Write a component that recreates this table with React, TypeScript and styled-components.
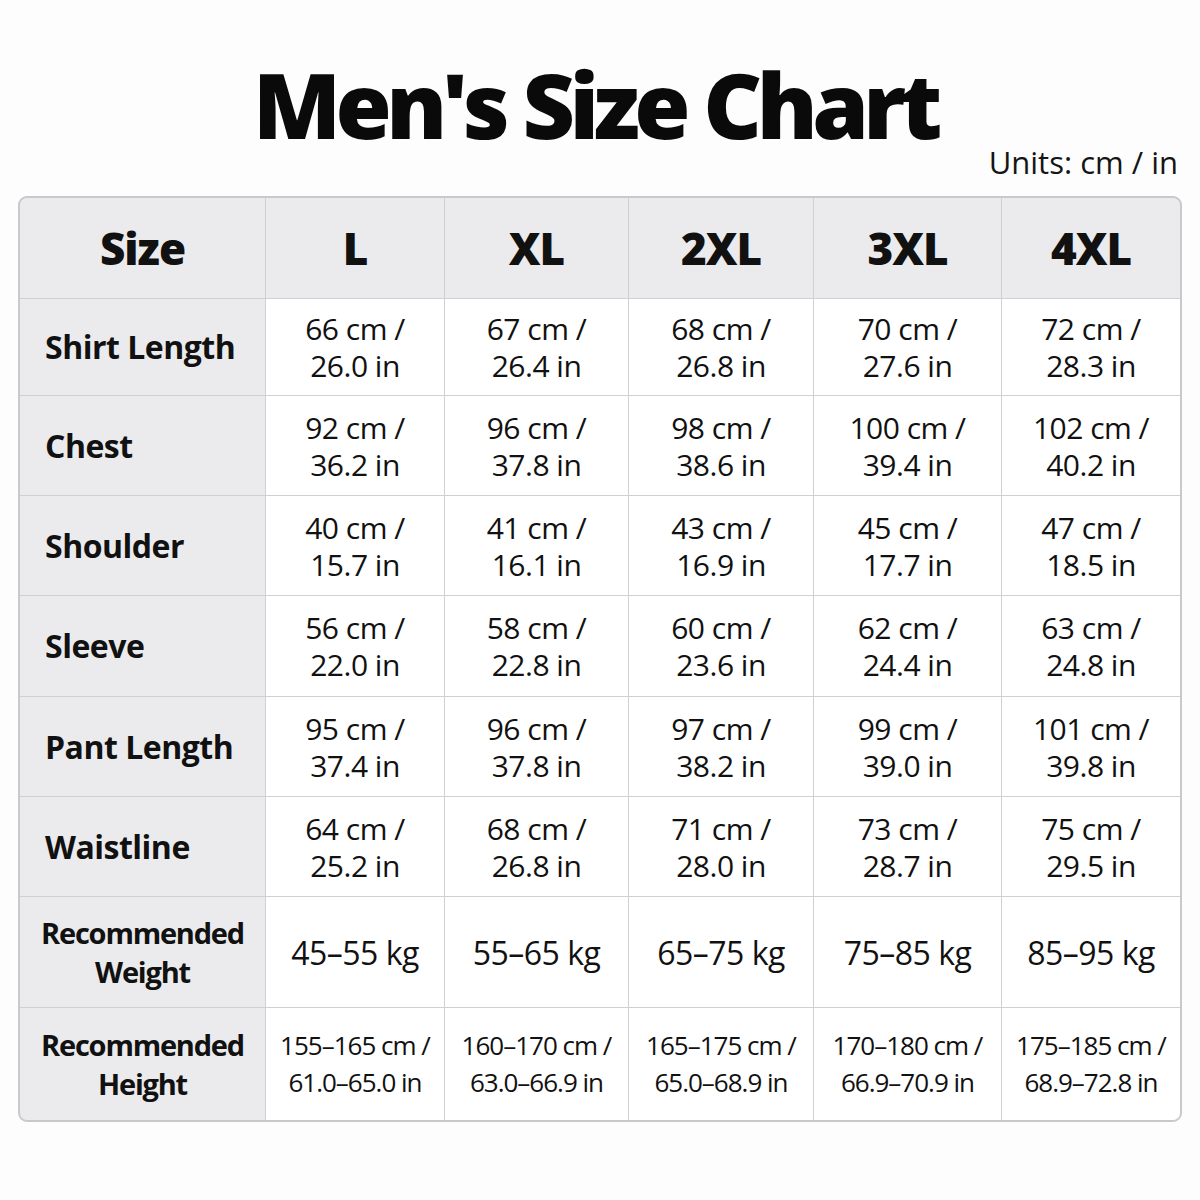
import React from "react";
import styled, { createGlobalStyle } from "styled-components";

const Global = createGlobalStyle`
  html, body { margin: 0; padding: 0; background: #fdfdfd; }
  body { font-family: "Open Sans", "Noto Sans", sans-serif; color: #111; }
`;

const Page = styled.div`
  width: 1200px;
  height: 1200px;
  box-sizing: border-box;
  padding: 0 18px;
  display: flex;
  flex-direction: column;
`;

const Title = styled.h1`
  margin: 49px 0 0;
  padding-right: 10px;
  font-size: 91px;
  line-height: 110px;
  font-weight: 800;
  letter-spacing: -5.5px;
  text-align: center;
  color: #0a0a0a;
`;

const Units = styled.div`
  align-self: flex-end;
  margin: -15px 4px 0 0;
  font-size: 31px;
  line-height: 36px;
  font-weight: 500;
  letter-spacing: 0px;
  color: #151515;
`;

const Table = styled.div`
  margin-top: 16px;
  display: grid;
  grid-template-columns: 245px 178px 183px 184px 187px 1fr;
  grid-template-rows: 100px 96px 99px 99px 100px 99px 99px 110px 112px;
  gap: 1px;
  background: #d0d0d2;
  border: 2px solid #c9c9cb;
  border-radius: 9px;
  overflow: hidden;
`;

const Cell = styled.div<{ $head?: boolean; $label?: boolean; $center?: boolean; $size?: "big" | "small" }>`
  display: flex;
  flex-direction: column;
  align-items: ${(p) => (p.$label && !p.$center ? "flex-start" : "center")};
  justify-content: center;
  padding: ${(p) => (p.$label && !p.$center ? "0 0 0 25px" : "0")};
  background: ${(p) => (p.$head || p.$label ? "#ebebed" : "#ffffff")};
  text-align: center;
  font-weight: ${(p) => (p.$head ? 800 : p.$label ? 700 : 500)};
  font-size: ${(p) => (p.$head ? "44px" : p.$size === "small" ? "26px" : p.$size === "big" ? "32px" : "30px")};
  line-height: ${(p) => (p.$head ? "50px" : "37px")};
  letter-spacing: ${(p) => (p.$head ? "-1px" : p.$size === "small" ? "-1px" : "-0.5px")};
  color: #111;
`;

const Line = styled.span`
  display: block;
  white-space: nowrap;
`;

const LabelText = styled.span<{ $compact?: boolean }>`
  display: block;
  font-size: ${(p) => (p.$compact ? 29 : 32)}px;
  line-height: ${(p) => (p.$compact ? 39 : 40)}px;
  letter-spacing: ${(p) => (p.$compact ? "-1.2px" : "-0.5px")};
  white-space: nowrap;
`;

const sizes = ["L", "XL", "2XL", "3XL", "4XL"];

type Row = { label: string[]; values: string[][]; center?: boolean; size?: "big" | "small" };

const rows: Row[] = [
  { label: ["Shirt Length"], values: [["66 cm /", "26.0 in"], ["67 cm /", "26.4 in"], ["68 cm /", "26.8 in"], ["70 cm /", "27.6 in"], ["72 cm /", "28.3 in"]] },
  { label: ["Chest"], values: [["92 cm /", "36.2 in"], ["96 cm /", "37.8 in"], ["98 cm /", "38.6 in"], ["100 cm /", "39.4 in"], ["102 cm /", "40.2 in"]] },
  { label: ["Shoulder"], values: [["40 cm /", "15.7 in"], ["41 cm /", "16.1 in"], ["43 cm /", "16.9 in"], ["45 cm /", "17.7 in"], ["47 cm /", "18.5 in"]] },
  { label: ["Sleeve"], values: [["56 cm /", "22.0 in"], ["58 cm /", "22.8 in"], ["60 cm /", "23.6 in"], ["62 cm /", "24.4 in"], ["63 cm /", "24.8 in"]] },
  { label: ["Pant Length"], values: [["95 cm /", "37.4 in"], ["96 cm /", "37.8 in"], ["97 cm /", "38.2 in"], ["99 cm /", "39.0 in"], ["101 cm /", "39.8 in"]] },
  { label: ["Waistline"], values: [["64 cm /", "25.2 in"], ["68 cm /", "26.8 in"], ["71 cm /", "28.0 in"], ["73 cm /", "28.7 in"], ["75 cm /", "29.5 in"]] },
  { label: ["Recommended", "Weight"], center: true, size: "big", values: [["45–55 kg"], ["55–65 kg"], ["65–75 kg"], ["75–85 kg"], ["85–95 kg"]] },
  {
    label: ["Recommended", "Height"],
    center: true,
    size: "small",
    values: [
      ["155–165 cm /", "61.0–65.0 in"],
      ["160–170 cm /", "63.0–66.9 in"],
      ["165–175 cm /", "65.0–68.9 in"],
      ["170–180 cm /", "66.9–70.9 in"],
      ["175–185 cm /", "68.9–72.8 in"],
    ],
  },
];

export default function App() {
  return (
    <>
      <Global />
      <Page>
        <Title>Men's Size Chart</Title>
        <Units>Units: cm / in</Units>
        <Table>
          <Cell $head>Size</Cell>
          {sizes.map((s) => (
            <Cell $head key={s}>
              {s}
            </Cell>
          ))}
          {rows.map((r) => (
            <React.Fragment key={r.label.join(" ")}>
              <Cell $label $center={r.center}>
                {r.label.map((l) => (
                  <LabelText key={l} $compact={r.center}>
                    {l}
                  </LabelText>
                ))}
              </Cell>
              {r.values.map((v, i) => (
                <Cell key={i} $size={r.size}>
                  {v.map((t) => (
                    <Line key={t}>{t}</Line>
                  ))}
                </Cell>
              ))}
            </React.Fragment>
          ))}
        </Table>
      </Page>
    </>
  );
}
